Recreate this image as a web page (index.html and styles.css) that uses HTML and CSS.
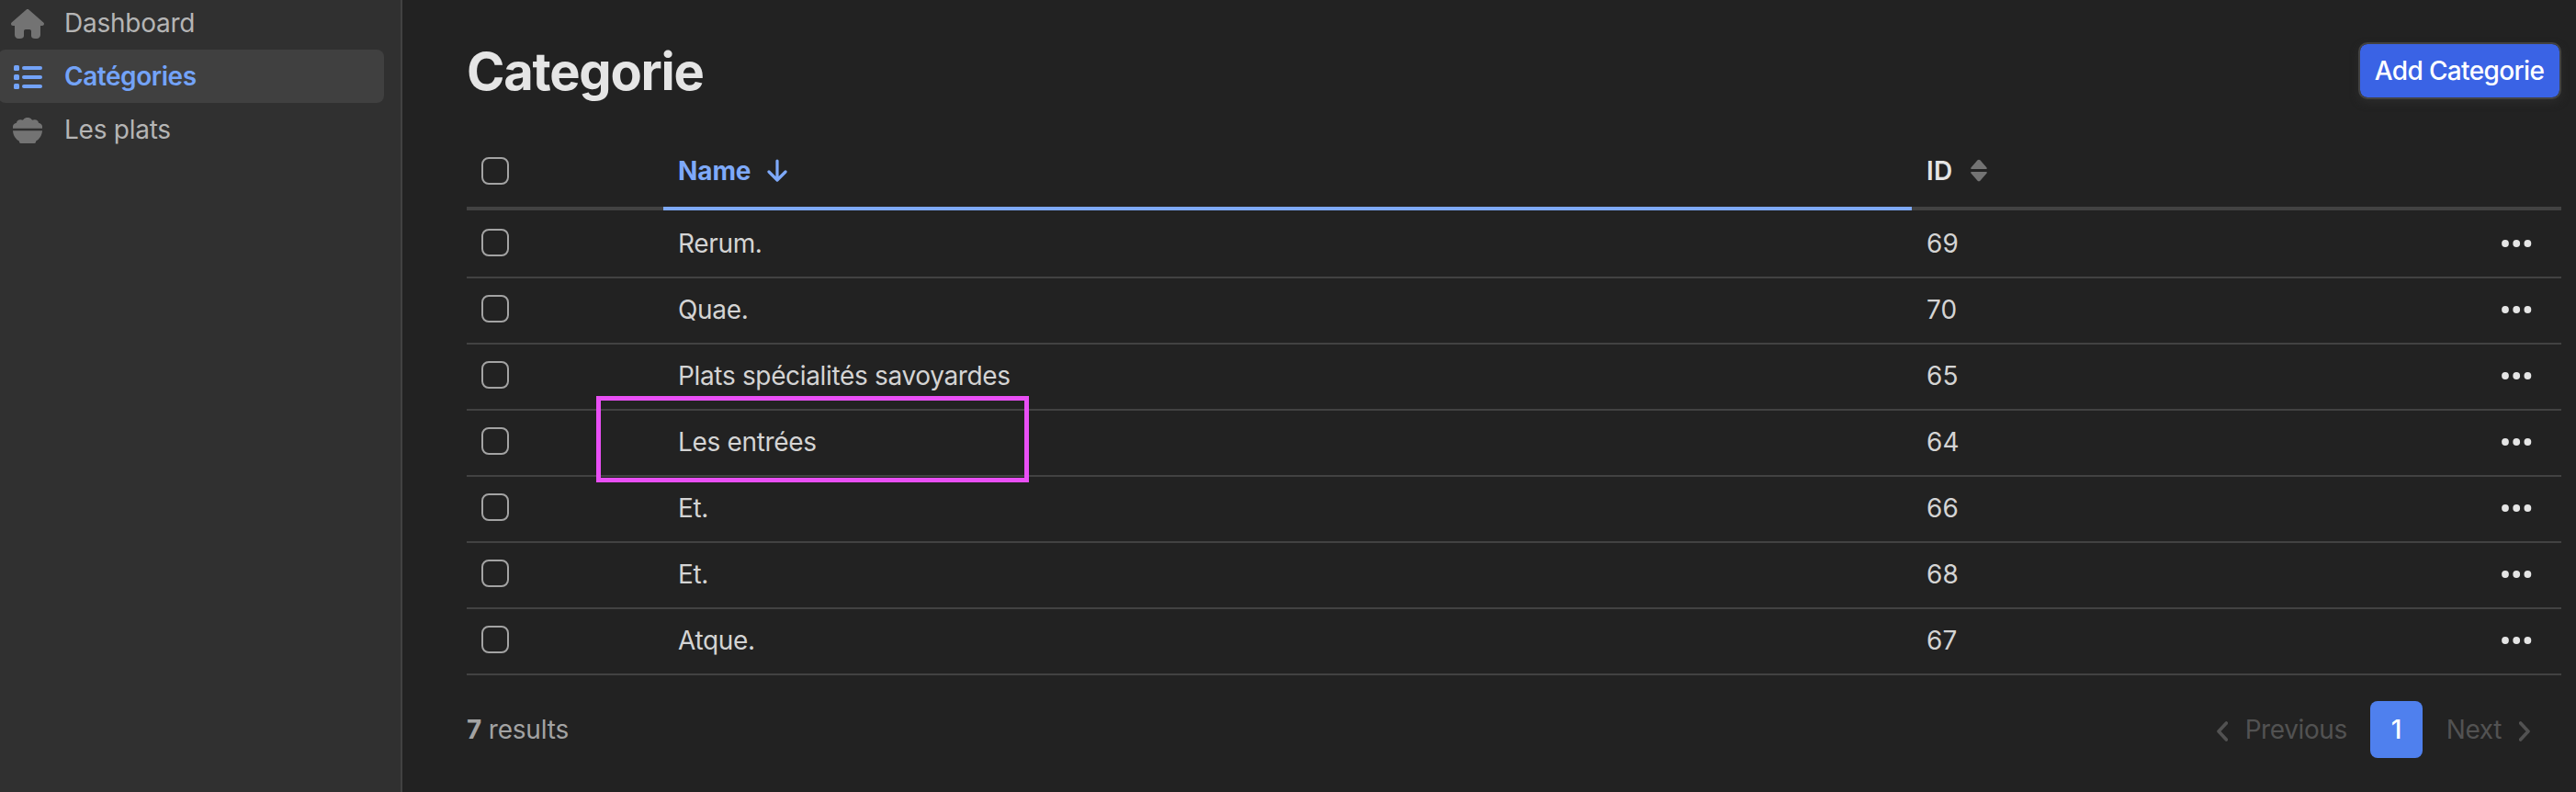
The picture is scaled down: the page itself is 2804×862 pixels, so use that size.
FILE: index.html
```html
<!DOCTYPE html>
<html lang="fr">
<head>
<meta charset="utf-8">
<title>Categorie</title>
<link rel="stylesheet" href="styles.css">
</head>
<body>
<svg width="0" height="0" class="defs">
  <symbol id="dots" viewBox="0 0 34 10"><circle cx="5" cy="5" r="3.9"/><circle cx="17.2" cy="5" r="3.9"/><circle cx="29.4" cy="5" r="3.9"/></symbol>
</svg>
<div class="app">
  <nav class="sidebar">
    <a class="item"><span class="icon"><svg width="36" height="32" viewBox="0 0 576 512"><path d="M575.8 255.500c0 18-15 32.100-32 32.100H512V448c0 36-28 64-64 64h-32c-36 0-64-14-64-48v-80c0-18-14-32-32-32h-64c-18 0-32 14-32 32v80c0 34-28 48-64 48h-32c-36 0-64-28-64-64V287.600H32c-18 0-32-14-32-32.100 0-9 3-17 10-24L266.400 8c7-7 15-8 22-8s15 2 21 7L564.800 231.500c8 7 12 15 11 24z"/></svg></span><span class="label">Dashboard</span></a>
    <a class="item active"><span class="icon"><svg width="32" height="28" viewBox="0 0 32 28"><rect x="1" y="1" width="6" height="6" rx="1.500"/><rect x="1" y="11" width="6" height="6" rx="1.500"/><rect x="1" y="21" width="6" height="6" rx="1.500"/><rect x="10" y="2" width="22" height="4" rx="2"/><rect x="10" y="12" width="22" height="4" rx="2"/><rect x="10" y="22" width="22" height="4" rx="2"/></svg></span><span class="label">Catégories</span></a>
    <a class="item"><span class="icon"><svg width="32" height="28" viewBox="0 0 32 28"><path d="M0 11.800V9.500C.3 7.500 1.800 6.300 4 5.800C4.200 2.900 7 1.700 9.600 2.500C10.500 2.800 11 2.600 11.600 1.900C13.500-.6 18.500-.6 20.400 1.900C21 2.600 21.500 2.800 22.400 2.500C25 1.700 27.800 2.900 28 5.800C30.200 6.300 31.700 7.500 32 9.500V11.800ZM0 14.200H32C31.800 19.200 29 23.200 25 25.800V26.600Q25 28 23.600 28H8.400Q7 28 7 26.600V25.800C3 23.200.2 19.200 0 14.200Z"/></svg></span><span class="label">Les plats</span></a>
  </nav>
  <main class="main">
    <header class="header"><h1 class="title">Categorie</h1><button class="add">Add Categorie</button></header>
    <section class="grid">
      <div class="row head">
        <div class="cell"><span class="check"></span></div>
        <div class="cell sorted">Name<svg class="arrow" width="22" height="25" viewBox="0 0 22 25"><path d="M11 2V22.500M2 14L11 23L20 14" fill="none" stroke="currentColor" stroke-width="3.200" stroke-linecap="round" stroke-linejoin="round"/></svg></div>
        <div class="cell">ID<svg class="sort" width="18" height="26" viewBox="0 0 18 26"><path d="M1.200 11Q-.6 11 .6 9.200L7.600 1.300Q9 0 10.400 1.300L17.400 9.200Q18.600 11 16.800 11ZM1.200 14Q-.6 14 .6 15.800L7.600 23.700Q9 25 10.400 23.700L17.400 15.800Q18.600 14 16.800 14Z"/></svg></div>
      </div>
      <div class="row first"><div class="cell"><span class="check"></span></div><div class="cell">Rerum.</div><div class="cell id">69<svg class="more"><use href="#dots"/></svg></div></div>
      <div class="row"><div class="cell"><span class="check"></span></div><div class="cell">Quae.</div><div class="cell id">70<svg class="more"><use href="#dots"/></svg></div></div>
      <div class="row"><div class="cell"><span class="check"></span></div><div class="cell">Plats spécialités savoyardes</div><div class="cell id">65<svg class="more"><use href="#dots"/></svg></div></div>
      <div class="row"><div class="cell"><span class="check"></span></div><div class="cell marked">Les entrées<span class="mark"></span></div><div class="cell id">64<svg class="more"><use href="#dots"/></svg></div></div>
      <div class="row"><div class="cell"><span class="check"></span></div><div class="cell">Et.</div><div class="cell id">66<svg class="more"><use href="#dots"/></svg></div></div>
      <div class="row"><div class="cell"><span class="check"></span></div><div class="cell">Et.</div><div class="cell id">68<svg class="more"><use href="#dots"/></svg></div></div>
      <div class="row"><div class="cell"><span class="check"></span></div><div class="cell">Atque.</div><div class="cell id">67<svg class="more"><use href="#dots"/></svg></div></div>
    </section>
    <footer class="footer">
      <div class="results"><strong>7</strong> results</div>
      <div class="pager">
        <span class="prev"><svg class="chev" width="12" height="22" viewBox="0 0 12 22"><path d="M10.400 2L2 11L10.400 20"/></svg>Previous</span>
        <span class="page">1</span>
        <span class="next">Next<svg class="chev" width="12" height="22" viewBox="0 0 12 22"><path d="M1.600 2L10 11L1.600 20"/></svg></span>
      </div>
    </footer>
  </main>
</div>
</body>
</html>
```

FILE: styles.css
```css
* { box-sizing: border-box; }
body { margin: 0; background: #222; color: #d4d4d4; font: 400 28px/42px Inter, sans-serif; letter-spacing: -0.34px; overflow: hidden; }
.defs { position: absolute; }
.app { display: flex; height: 862px; }

.sidebar { width: 438px; flex: none; background: #303030; border-right: 2px solid #424242; overflow: hidden; }
.item { display: flex; align-items: center; height: 58px; margin: 0 18px 0 -2px; border-radius: 8px; color: #b5b5b5; letter-spacing: -0.25px; }
.item:first-child { margin-top: -4px; }
.item.active { background: #404040; color: #73a3f8; font-weight: 600; letter-spacing: -0.45px; }
.icon { display: flex; justify-content: center; width: 64px; margin-right: 8px; color: #737373; }
.icon svg { fill: currentColor; position: relative; top: 1px; }
.active .icon { color: #73a3f8; }

.main { flex: 1; padding: 46px 16px 0 70px; }
.header { display: flex; justify-content: space-between; height: 101px; }
.title { margin: 0; font-size: 56px; line-height: 64px; font-weight: 700; letter-spacing: -1.25px; color: #e5e5e5; }
.add { width: 221px; height: 62px; padding: 0 1px 0 0; border: 2px solid #424242; border-radius: 10px; background: #3a63e5; background-clip: padding-box; color: #fff; font: 500 28px/58px Inter, sans-serif; letter-spacing: -0.64px; white-space: nowrap; box-shadow: 0 4px 8px #2b2b2b; }

.row { display: grid; grid-template-columns: 214px 1359px 1fr; height: 72px; }
.row.first { height: 74px; }
.row.first .cell { padding-top: 2px; }
.cell { display: flex; align-items: center; padding: 0 16px; border-bottom: 2px solid #424242; }
.row:not(.head) .cell:not(:first-child) { line-height: 68px; align-items: flex-start; }
.check { width: 30px; height: 30px; border: 2px solid #a3a3a3; border-radius: 8px; margin-top: -4px; }
.row.head { height: 82px; }
.head .cell { border-bottom-width: 4px; padding-bottom: 1px; color: #e5e5e5; font-weight: 600; letter-spacing: 0.2px; }
.head .check { margin: 0; }
.head .cell.sorted { color: #7ea9f9; border-color: #7ea9f9; font-weight: 700; letter-spacing: -0.1px; }
.arrow { margin-left: 18px; }
.sort { margin-left: 20px; fill: #737373; }
.row .id { justify-content: space-between; padding-right: 32px; letter-spacing: 0.2px; }
.more { width: 34px; height: 10px; margin-top: 29px; fill: #e5e5e5; }
.marked { position: relative; }
.mark { position: absolute; left: -73px; top: -16px; width: 471px; height: 94px; border: 5px solid #e94ff5; }

.footer { display: flex; justify-content: space-between; align-items: center; height: 62px; margin-top: 28px; color: #a3a3a3; letter-spacing: -0.2px; }
.results strong { font-weight: 700; }
.pager { display: flex; align-items: center; margin-right: 34px; color: #525252; letter-spacing: -0.4px; }
.prev, .next { display: flex; align-items: center; }
.prev { gap: 19px; }
.next { gap: 19px; }
.chev { position: relative; top: 2px; fill: none; stroke: currentColor; stroke-width: 3.6; stroke-linecap: round; stroke-linejoin: round; }
.page { width: 57px; height: 62px; margin: 0 26px 0 25px; border-radius: 8px; background: #4f80ee; color: #fff; font-weight: 500; line-height: 62px; text-align: center; }
```
